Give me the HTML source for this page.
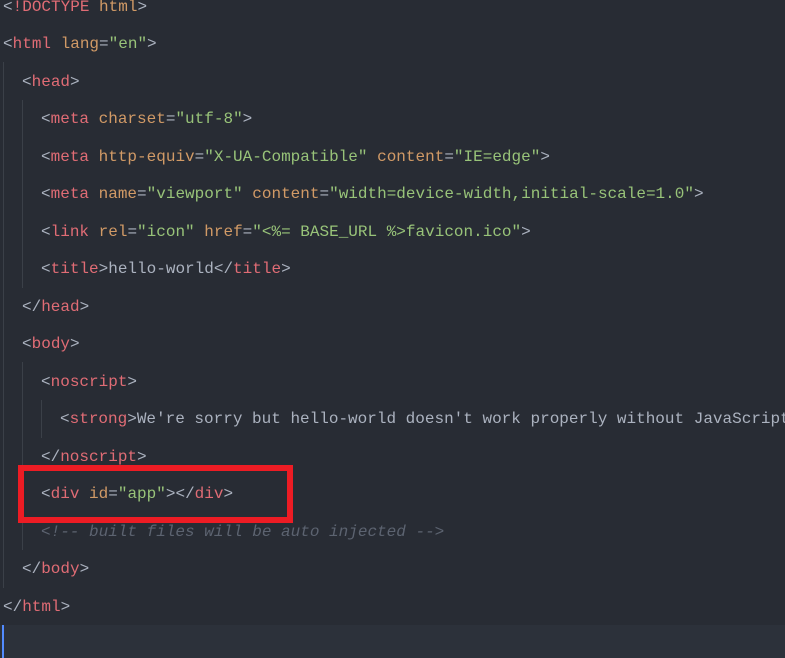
<!DOCTYPE html>
<html><head><style>
body{margin:0;width:785px;height:658px;background:#282c34;overflow:hidden;position:relative;font-family:"Liberation Mono",monospace;font-size:16px;color:#abb2bf}
.l{position:absolute;left:0;height:20px;line-height:20px;white-space:pre}
.t{color:#e06c75}.a{color:#d19a66}.s{color:#98c379}.c{color:#5c6370;font-style:italic}
.g{position:absolute;width:1px;background:#3b4048}
</style></head><body>
<div class="g" style="left:3px;top:62px;height:526px"></div>
<div class="g" style="left:22px;top:100px;height:188px"></div>
<div class="g" style="left:22px;top:362px;height:188px"></div>
<div class="g" style="left:41px;top:400px;height:38px"></div>
<div class="l" style="top:-3px;left:3px">&lt;<span class="t">!DOCTYPE</span> <span class="a">html</span>&gt;</div>
<div class="l" style="top:34px;left:3px">&lt;<span class="t">html</span> <span class="a">lang</span>=<span class="s">"en"</span>&gt;</div>
<div class="l" style="top:72px;left:22px">&lt;<span class="t">head</span>&gt;</div>
<div class="l" style="top:109px;left:41px">&lt;<span class="t">meta</span> <span class="a">charset</span>=<span class="s">"utf-8"</span>&gt;</div>
<div class="l" style="top:147px;left:41px">&lt;<span class="t">meta</span> <span class="a">http-equiv</span>=<span class="s">"X-UA-Compatible"</span> <span class="a">content</span>=<span class="s">"IE=edge"</span>&gt;</div>
<div class="l" style="top:184px;left:41px">&lt;<span class="t">meta</span> <span class="a">name</span>=<span class="s">"viewport"</span> <span class="a">content</span>=<span class="s">"width=device-width,initial-scale=1.0"</span>&gt;</div>
<div class="l" style="top:222px;left:41px">&lt;<span class="t">link</span> <span class="a">rel</span>=<span class="s">"icon"</span> <span class="a">href</span>=<span class="s">"&lt;%= BASE_URL %&gt;favicon.ico"</span>&gt;</div>
<div class="l" style="top:259px;left:41px">&lt;<span class="t">title</span>&gt;hello-world&lt;/<span class="t">title</span>&gt;</div>
<div class="l" style="top:297px;left:22px">&lt;/<span class="t">head</span>&gt;</div>
<div class="l" style="top:334px;left:22px">&lt;<span class="t">body</span>&gt;</div>
<div class="l" style="top:372px;left:41px">&lt;<span class="t">noscript</span>&gt;</div>
<div class="l" style="top:409px;left:60px;width:725px;overflow:hidden">&lt;<span class="t">strong</span>&gt;We're sorry but hello-world doesn't work properly without JavaScript</div>
<div class="l" style="top:447px;left:41px">&lt;/<span class="t">noscript</span>&gt;</div>
<div class="l" style="top:484px;left:41px">&lt;<span class="t">div</span> <span class="a">id</span>=<span class="s">"app"</span>&gt;&lt;/<span class="t">div</span>&gt;</div>
<div class="l c" style="top:522px;left:41px">&lt;!-- built files will be auto injected --&gt;</div>
<div class="l" style="top:559px;left:22px">&lt;/<span class="t">body</span>&gt;</div>
<div class="l" style="top:597px;left:3px">&lt;/<span class="t">html</span>&gt;</div>
<div style="position:absolute;left:0;top:625px;width:785px;height:33px;background:#2c313a"></div>
<div style="position:absolute;left:2px;top:625px;width:2px;height:33px;background:#528bff"></div>
<div style="position:absolute;left:18px;top:465px;width:263px;height:46px;border:6px solid #ed1c24"></div>
</body></html>
